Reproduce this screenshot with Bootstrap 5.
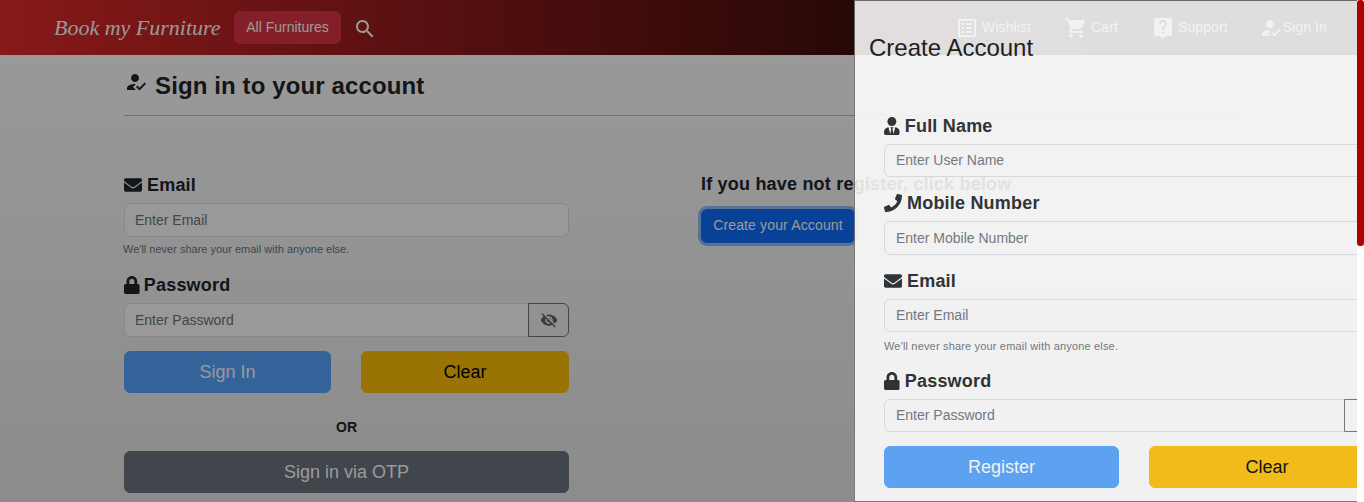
<!DOCTYPE html>
<html lang="en">
<head>
<meta charset="utf-8">
<title>Book my Furniture</title>
<link href="https://cdn.jsdelivr.net/npm/bootstrap@5.3.0/dist/css/bootstrap.min.css" rel="stylesheet">
<style>
html,body{height:502px;overflow:hidden}
body{font-family:"Liberation Sans",Arial,sans-serif;background:linear-gradient(to bottom,#fff 55px,#e9e9e9 502px)}
.top-bar{height:55px;padding:0 37px 0 54px;background:linear-gradient(to right,#e22a2a,#000 89%);flex-wrap:nowrap;justify-content:flex-start}
.brand-script{font-family:"Liberation Serif",serif;font-style:italic;font-size:22px;color:#fff;padding:0;margin:0 13px 0 0;width:167px;white-space:nowrap;line-height:1}
.cat-btn{font-size:14px;height:33px;width:107px;padding:0;color:#fff}
.find-icon{width:24px;height:24px;fill:#fff;margin:2px 0 0 12px}
.nav-items{gap:33px;margin-left:auto}
.nav-entry{color:#fff;font-size:14px;letter-spacing:.1px;text-decoration:none;display:flex;align-items:center;gap:3px}
.nav-entry svg{width:24px;height:24px;fill:#fff}
.nav-entry-last{margin-left:-2px;gap:0}
.page-title{font-size:24px;font-weight:700;letter-spacing:.12px;line-height:30px;margin:0;padding-top:16px;height:60px;display:flex;gap:7px}
.page-title svg{width:24px;height:24px;fill:currentColor;margin-top:-1px}
.title-rule{margin:0 0 58px;border-top:1px solid #000;opacity:.25}
.left-form{width:445px;flex:none}
.right-form{margin:-1px 0 0 132px;flex:none}
.field-head{font-size:18px;font-weight:700;letter-spacing:.2px;line-height:22px;margin:0 0 7px;display:flex;align-items:center;gap:5px;white-space:nowrap}
.field-head svg{height:18px;width:auto;fill:currentColor;flex:none}
.left-form .lock-head{gap:4px}
.field-input{font-size:14px;height:34px;padding:0 10px}
.field-input::placeholder{color:#6c757d}
.field-note{display:block;font-size:11px;line-height:12px;margin:6px 0 19px -1px;color:#6c757d}
.eye-btn{width:41px;height:34px;padding:0;display:flex;align-items:center;justify-content:center;flex:none;border-color:#6c757d;color:#6c757d}
.eye-btn svg{width:18px;height:18px;fill:#5c636a}
.wide-btn{height:42px;font-size:18px;padding:0;display:block;width:100%}
.soft-btn{--bs-btn-disabled-bg:#55a5ff;--bs-btn-disabled-border-color:#55a5ff;--bs-btn-disabled-color:#fff;--bs-btn-disabled-opacity:1}
.btn-pair{gap:30px;margin-top:14px}
.btn-pair .wide-btn{flex:1 1 0;min-width:0}
.left-form .btn-pair .soft-btn{flex:0 0 207px}
.reg-form .btn-pair .soft-btn{flex:0 0 235px}
.or-line{font-size:14px;font-weight:700;line-height:16px;text-align:center;margin:26px 0 16px}
.hint-head{font-size:18px;font-weight:700;letter-spacing:.2px;line-height:22px;margin:0 0 14px;white-space:nowrap}
.create-btn{font-size:14px;height:34px;width:154px;padding:0 0 1px;letter-spacing:.15px;box-shadow:0 0 0 3px rgba(49,132,253,.5);white-space:nowrap}
.dim-layer{background:rgba(0,0,0,.4);z-index:1040}
.reg-panel.offcanvas{width:510px;opacity:.87;border:1px solid #777;border-right:0;background:#fff;overflow:hidden}
.reg-panel .offcanvas-header{padding:0 14px;height:113.7px;align-items:flex-start;display:block}
.reg-panel .offcanvas-title{font-size:24px;line-height:30px;margin:32px 0 0;font-weight:400}
.reg-panel .offcanvas-body{padding:0 0 0 29px;overflow:hidden;flex:none;width:530px}
.reg-form{width:501px}
.reg-form .field-head{margin-bottom:7.2px}
.reg-form .field-input{height:33.5px;padding:0 11px 1px}
.reg-form .gap-field{margin-bottom:14.8px}
.reg-form .field-note{margin:7.6px 0 17.7px 0;letter-spacing:.17px}
.reg-form .eye-btn{height:33.5px}
.page-rail{position:fixed;top:0;right:0;bottom:0;width:7px;background:#fff;z-index:1060}
.page-thumb{height:246px;background:#b00000;border-radius:3px}
</style>
</head>
<body>
<svg width="0" height="0" class="position-absolute">
<symbol id="i-mail" viewBox="0 0 512 512"><path d="M502.3 190.8c3.9-3.1 9.7-.2 9.7 4.7V400c0 26.5-21.5 48-48 48H48c-26.5 0-48-21.5-48-48V195.6c0-5 5.7-7.8 9.7-4.7 22.4 17.4 52.1 39.5 154.1 113.6 21.1 15.4 56.7 47.8 92.2 47.6 35.7.3 72-32.8 92.3-47.6 102-74.1 131.6-96.3 154-113.7zM256 320c23.2.4 56.6-29.2 73.4-41.4 132.7-96.3 142.8-104.7 173.4-128.7 5.8-4.5 9.2-11.5 9.2-18.9v-19c0-26.5-21.5-48-48-48H48C21.5 64 0 85.5 0 112v19c0 7.4 3.4 14.3 9.2 18.9 30.6 23.9 40.7 32.4 173.4 128.7 16.8 12.2 50.2 41.8 73.4 41.4z"/></symbol>
<symbol id="i-lock" viewBox="0 0 448 512"><path d="M400 224h-24v-72C376 68.2 307.8 0 224 0S72 68.2 72 152v72H48c-26.5 0-48 21.5-48 48v192c0 26.5 21.5 48 48 48h352c26.5 0 48-21.5 48-48V272c0-26.5-21.5-48-48-48zm-104 0H152v-72c0-39.7 32.3-72 72-72s72 32.3 72 72v72z"/></symbol>
<symbol id="i-phone" viewBox="0 0 512 512"><path d="M493.4 24.6l-104-24c-11.3-2.6-22.9 3.3-27.5 13.9l-48 112c-4.2 9.8-1.4 21.3 6.9 28l60.6 49.6c-36 76.7-98.9 140.5-177.2 177.2l-49.6-60.6c-6.8-8.3-18.2-11.1-28-6.9l-112 48C3.9 366.5-2 378.1.6 389.4l24 104C27.1 504.2 36.7 512 48 512c256.1 0 464-207.5 464-464 0-11.2-7.7-20.9-18.6-23.4z"/></symbol>
<symbol id="i-tie" viewBox="0 0 448 512"><path d="M224 256c70.7 0 128-57.3 128-128S294.7 0 224 0 96 57.3 96 128s57.3 128 128 128zm95.8 32.6L272 480l-32-136 32-56h-96l32 56-32 136-47.8-191.4C56.9 292 0 350.3 0 422.4V464c0 26.5 21.5 48 48 48h352c26.5 0 48-21.5 48-48v-41.6c0-72.1-56.9-130.4-128.2-133.8z"/></symbol>
<symbol id="i-reg" viewBox="0 0 24 24"><path d="M9 17l3-2.94c-.39-.04-.68-.06-1-.06-2.67 0-8 1.34-8 4v2h9l-3-3zm2-5c2.21 0 4-1.79 4-4s-1.79-4-4-4-4 1.79-4 4 1.79 4 4 4m4.47 8.5L12 17l1.4-1.41 2.07 2.08 5.13-5.17 1.4 1.41z"/></symbol>
<symbol id="i-search" viewBox="0 0 24 24"><path d="M15.5 14h-.79l-.28-.27C15.41 12.59 16 11.11 16 9.5 16 5.91 13.09 3 9.5 3S3 5.91 3 9.5 5.91 16 9.5 16c1.61 0 3.09-.59 4.23-1.57l.27.28v.79l5 4.99L20.49 19l-4.99-5zm-6 0C7.01 14 5 11.99 5 9.5S7.01 5 9.5 5 14 7.01 14 9.5 11.99 14 9.5 14z"/></symbol>
<symbol id="i-eyeoff" viewBox="0 0 24 24"><path d="M12 7c2.76 0 5 2.24 5 5 0 .65-.13 1.26-.36 1.83l2.92 2.92c1.51-1.26 2.7-2.89 3.43-4.75-1.73-4.39-6-7.5-11-7.5-1.4 0-2.74.25-3.98.7l2.16 2.16C10.74 7.13 11.35 7 12 7zM2 4.27l2.28 2.28.46.46C3.08 8.3 1.78 10.02 1 12c1.73 4.39 6 7.5 11 7.5 1.55 0 3.03-.3 4.38-.84l.42.42L19.73 22 21 20.73 3.27 3 2 4.27zM7.53 9.8l1.55 1.55c-.05.21-.08.43-.08.65 0 1.66 1.34 3 3 3 .22 0 .44-.03.65-.08l1.55 1.55c-.67.33-1.41.53-2.2.53-2.76 0-5-2.24-5-5 0-.79.2-1.53.53-2.2zm4.31-.78l3.15 3.15.02-.16c0-1.66-1.34-3-3-3l-.17.01z"/></symbol>
<symbol id="i-cart" viewBox="0 0 24 24"><path d="M7 18c-1.1 0-1.99.9-1.99 2S5.9 22 7 22s2-.9 2-2-.9-2-2-2zM1 2v2h2l3.6 7.59-1.35 2.45c-.16.28-.25.61-.25.96 0 1.1.9 2 2 2h12v-2H7.42c-.14 0-.25-.11-.25-.25l.03-.12.9-1.63h7.45c.75 0 1.41-.41 1.75-1.03l3.58-6.49c.08-.14.12-.31.12-.48 0-.55-.45-1-1-1H5.21l-.94-2H1zm16 16c-1.1 0-1.99.9-1.99 2s.89 2 1.99 2 2-.9 2-2-.9-2-2-2z"/></symbol>
<symbol id="i-help" viewBox="0 0 24 24"><path d="M19 2H5c-1.11 0-2 .9-2 2v14c0 1.1.89 2 2 2h4l3 3 3-3h4c1.1 0 2-.9 2-2V4c0-1.1-.9-2-2-2zm-6 16h-2v-2h2v2zm2.07-7.75l-.9.92C13.45 11.9 13 12.5 13 14h-2v-.5c0-1.1.45-2.1 1.17-2.83l1.24-1.26c.37-.36.59-.86.59-1.41 0-1.1-.9-2-2-2s-2 .9-2 2H8c0-2.21 1.79-4 4-4s4 1.79 4 4c0 .88-.36 1.68-.93 2.25z"/></symbol>
<symbol id="i-list" viewBox="0 0 24 24"><path d="M19 5v14H5V5h14m1.1-2H3.9c-.5 0-.9.4-.9.9v16.2c0 .4.4.9.9.9h16.2c.4 0 .9-.5.9-.9V3.9c0-.5-.5-.9-.9-.9zM11 7h6v2h-6V7zm0 4h6v2h-6v-2zm0 4h6v2h-6zM7 7h2v2H7zm0 4h2v2H7zm0 4h2v2H7z"/></symbol>
</svg>

<nav class="navbar top-bar">
  <a class="navbar-brand brand-script" href="#">Book my Furniture</a>
  <button class="btn btn-danger cat-btn" type="button">All Furnitures</button>
  <svg class="find-icon"><use href="#i-search"/></svg>
  <div class="d-flex nav-items">
    <a class="nav-entry" href="#"><svg><use href="#i-list"/></svg>Wishlist</a>
    <a class="nav-entry" href="#"><svg><use href="#i-cart"/></svg>Cart</a>
    <a class="nav-entry" href="#"><svg><use href="#i-help"/></svg>Support</a>
    <a class="nav-entry nav-entry-last" href="#"><svg><use href="#i-reg"/></svg>Sign In</a>
  </div>
</nav>

<main class="container">
  <h1 class="page-title"><svg><use href="#i-reg"/></svg>Sign in to your account</h1>
  <hr class="title-rule">
  <div class="d-flex">
    <form class="left-form">
      <label class="field-head"><svg viewBox="0 0 512 512"><use href="#i-mail"/></svg>Email</label>
      <input class="form-control field-input" type="email" placeholder="Enter Email">
      <small class="field-note">We'll never share your email with anyone else.</small>
      <label class="field-head lock-head"><svg viewBox="0 0 448 512"><use href="#i-lock"/></svg>Password</label>
      <div class="input-group">
        <input class="form-control field-input" type="password" placeholder="Enter Password">
        <button class="btn eye-btn" type="button"><svg><use href="#i-eyeoff"/></svg></button>
      </div>
      <div class="d-flex btn-pair">
        <button class="btn btn-primary wide-btn soft-btn" type="button" disabled>Sign In</button>
        <button class="btn btn-warning wide-btn" type="button">Clear</button>
      </div>
      <div class="or-line">OR</div>
      <button class="btn btn-secondary wide-btn" type="button">Sign in via OTP</button>
    </form>
    <div class="right-form">
      <div class="hint-head">If you have not register, click below</div>
      <button class="btn btn-primary create-btn" type="button">Create your Account</button>
    </div>
  </div>
</main>

<div class="dim-layer position-fixed top-0 start-0 w-100 h-100"></div>

<aside class="offcanvas offcanvas-end show reg-panel" data-bs-backdrop="false" data-bs-scroll="true">
  <div class="offcanvas-header">
    <h5 class="offcanvas-title">Create Account</h5>
  </div>
  <div class="offcanvas-body">
    <form class="reg-form">
      <label class="field-head"><svg viewBox="0 0 448 512"><use href="#i-tie"/></svg>Full Name</label>
      <input class="form-control field-input gap-field" type="text" placeholder="Enter User Name">
      <label class="field-head"><svg viewBox="0 0 512 512"><use href="#i-phone"/></svg>Mobile Number</label>
      <input class="form-control field-input gap-field" type="text" placeholder="Enter Mobile Number">
      <label class="field-head"><svg viewBox="0 0 512 512"><use href="#i-mail"/></svg>Email</label>
      <input class="form-control field-input" type="email" placeholder="Enter Email">
      <small class="field-note">We'll never share your email with anyone else.</small>
      <label class="field-head"><svg viewBox="0 0 448 512"><use href="#i-lock"/></svg>Password</label>
      <div class="input-group">
        <input class="form-control field-input" type="password" placeholder="Enter Password">
        <button class="btn eye-btn" type="button"><svg><use href="#i-eyeoff"/></svg></button>
      </div>
      <div class="d-flex btn-pair">
        <button class="btn btn-primary wide-btn soft-btn" type="button" disabled>Register</button>
        <button class="btn btn-warning wide-btn" type="button">Clear</button>
      </div>
    </form>
  </div>
</aside>

<div class="page-rail"><div class="page-thumb"></div></div>

<script src="https://cdn.jsdelivr.net/npm/bootstrap@5.3.0/dist/js/bootstrap.bundle.min.js"></script>
</body>
</html>
